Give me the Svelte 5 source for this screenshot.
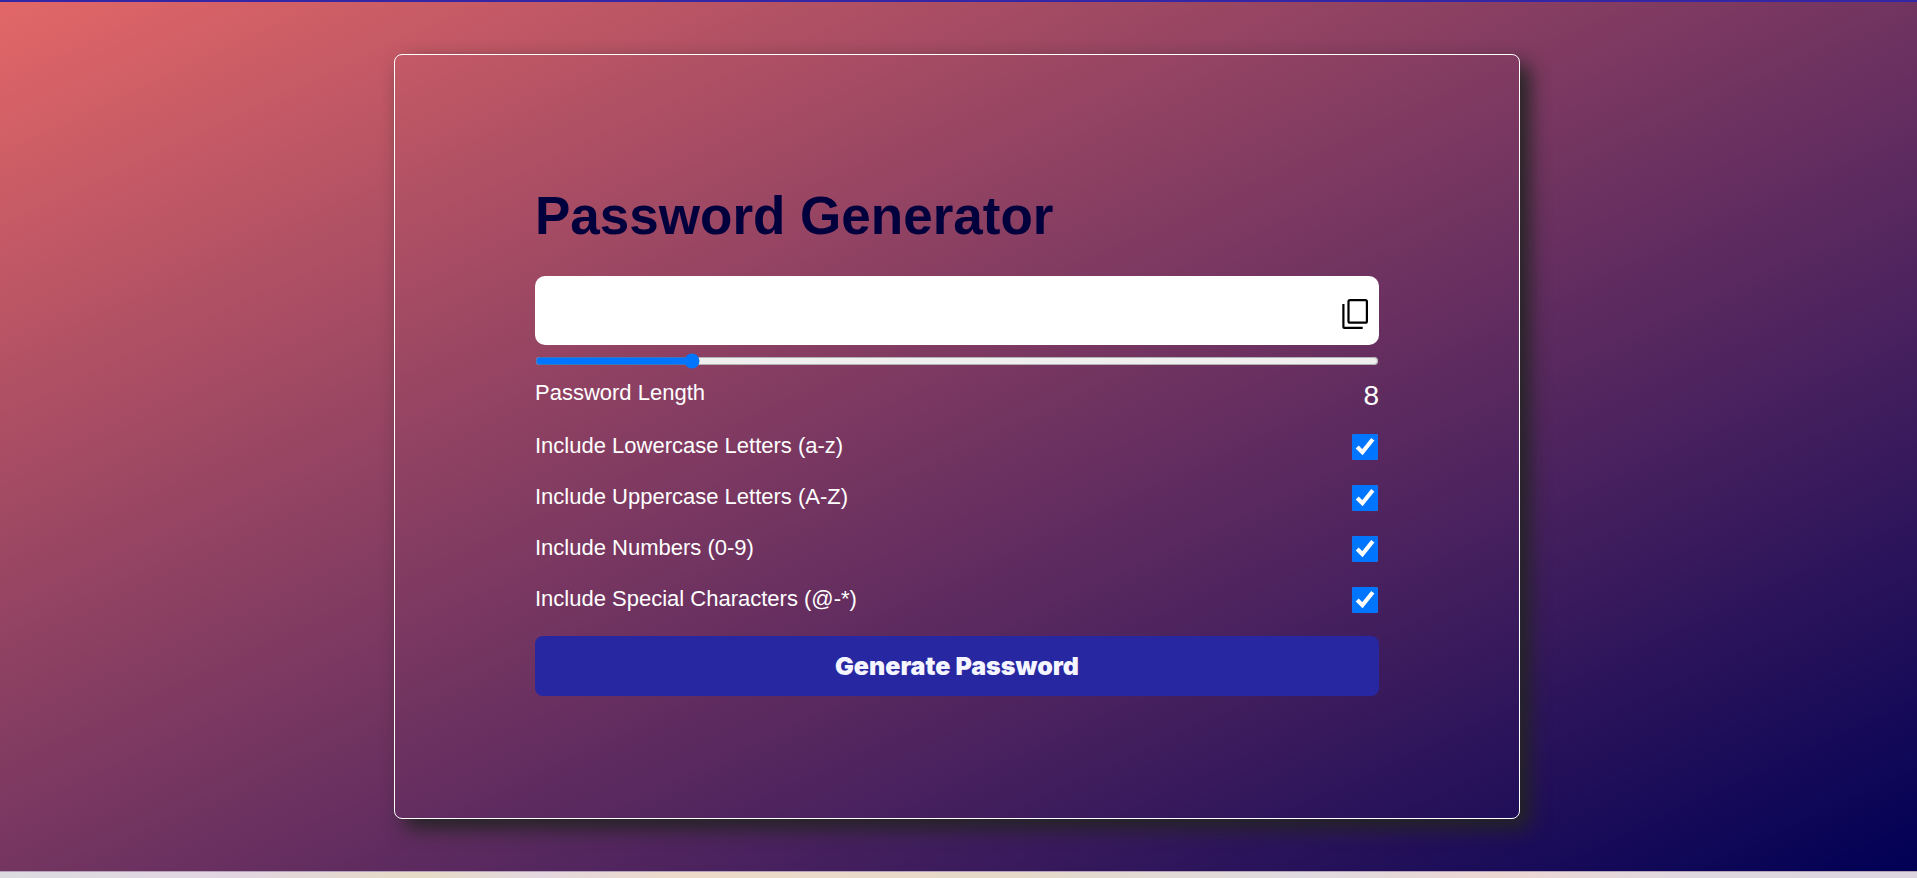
<script lang="ts">
  let length = $state(8);
  let password = $state('');
  let options = $state([
    { id: 'lower', label: 'Include Lowercase Letters (a-z)', chars: 'abcdefghijklmnopqrstuvwxyz', on: true },
    { id: 'upper', label: 'Include Uppercase Letters (A-Z)', chars: 'ABCDEFGHIJKLMNOPQRSTUVWXYZ', on: true },
    { id: 'numbers', label: 'Include Numbers (0-9)', chars: '0123456789', on: true },
    { id: 'special', label: 'Include Special Characters (@-*)', chars: '@#$%^&*-', on: true }
  ]);

  function generate() {
    const pool = options.filter((o) => o.on).map((o) => o.chars).join('');
    password = pool
      ? Array.from({ length }, () => pool[Math.floor(Math.random() * pool.length)]).join('')
      : '';
  }

  function copy() {
    navigator.clipboard?.writeText(password);
  }
</script>

<div class="page">
  <main class="card">
    <h1>Password Generator</h1>

    <div class="output">
      <input type="text" aria-label="Generated password" readonly value={password} />
      <button class="copy" type="button" aria-label="Copy password" onclick={copy}>
        <svg viewBox="0 0 26 30" width="26" height="30" fill="none" stroke="#000" stroke-width="2.2">
          <rect x="6.5" y="1.1" width="18.4" height="22.6" rx="1.5" />
          <path d="M1.4 5v23q0 .9 .9 .9h18.4" />
        </svg>
      </button>
    </div>

    <input class="slider" id="length" type="range" min="1" max="40" bind:value={length} />

    <div class="row length">
      <label for="length">Password Length</label>
      <output for="length">{length}</output>
    </div>

    {#each options as option (option.id)}
      <div class="row">
        <label for={option.id}>{option.label}</label>
        <input id={option.id} type="checkbox" bind:checked={option.on} />
      </div>
    {/each}

    <button class="generate" type="button" onclick={generate}>Generate Password</button>
  </main>
</div>
<div class="strip"></div>

<style>
  :global(body) {
    margin: 0;
    font-family: 'Liberation Sans', Arial, sans-serif;
  }
  :global(#app) {
    display: flex;
    flex-direction: column;
    min-height: 100vh;
  }
  .page {
    flex: 1;
    display: flex;
    align-items: center;
    justify-content: center;
    padding: 52px 27px 52px 24px;
    box-sizing: border-box;
    border-top: 2px solid #3426a5;
    background: linear-gradient(155deg, #e26767, #46205e 70%, #000055);
  }
  .card {
    box-sizing: border-box;
    width: 100%;
    max-width: 1126px;
    padding: 125px 140px 122px;
    border: 1px solid #fff;
    border-radius: 8px;
    box-shadow: 10px 10px 20px #242424;
    color: #fff;
  }
  h1 {
    margin: 0 0 24px;
    font-size: 53px;
    line-height: 72px;
    color: #00003c;
  }
  .output {
    display: flex;
    align-items: center;
    height: 69px;
    padding: 0 11px 0 16px;
    box-sizing: border-box;
    border-radius: 10px;
    background: #fff;
  }
  .output input {
    flex: 1;
    min-width: 0;
    border: 0;
    outline: 0;
    background: none;
    font: 28px 'Liberation Sans', Arial, sans-serif;
  }
  .copy {
    display: flex;
    padding: 7px 0 0;
    border: 0;
    background: none;
    cursor: pointer;
  }
  .slider {
    display: block;
    width: 100%;
    height: 16px;
    margin: 8px 0 10px;
    accent-color: #0075ff;
  }
  .row {
    display: flex;
    justify-content: space-between;
    height: 51px;
    font-size: 22px;
    line-height: 28px;
  }
  .row.length {
    height: 53px;
  }
  output {
    font-size: 28px;
    line-height: 34px;
  }
  .row input {
    width: 26px;
    height: 26px;
    margin: 2px 1px 0 0;
    accent-color: #0075ff;
  }
  .generate {
    display: block;
    width: 100%;
    height: 60px;
    border: 0;
    border-radius: 8px;
    background: #2727a2;
    color: #f5f5ff;
    font: 900 25px 'Arial Black', Inter, sans-serif;
    cursor: pointer;
  }
  .strip {
    height: 7px;
    box-sizing: border-box;
    border-top: 1px solid #b5a3bb;
    background: linear-gradient(90deg, #dcdce0, #e2d5e2 12%, #e6dbc5 22%, #e4d7df 28%, #eddac8 36%, #e6d9c8 52%, #dfdae0 68%, #edd6d2 78%, #e0d8e0 88%, #ddd5df);
  }
</style>
